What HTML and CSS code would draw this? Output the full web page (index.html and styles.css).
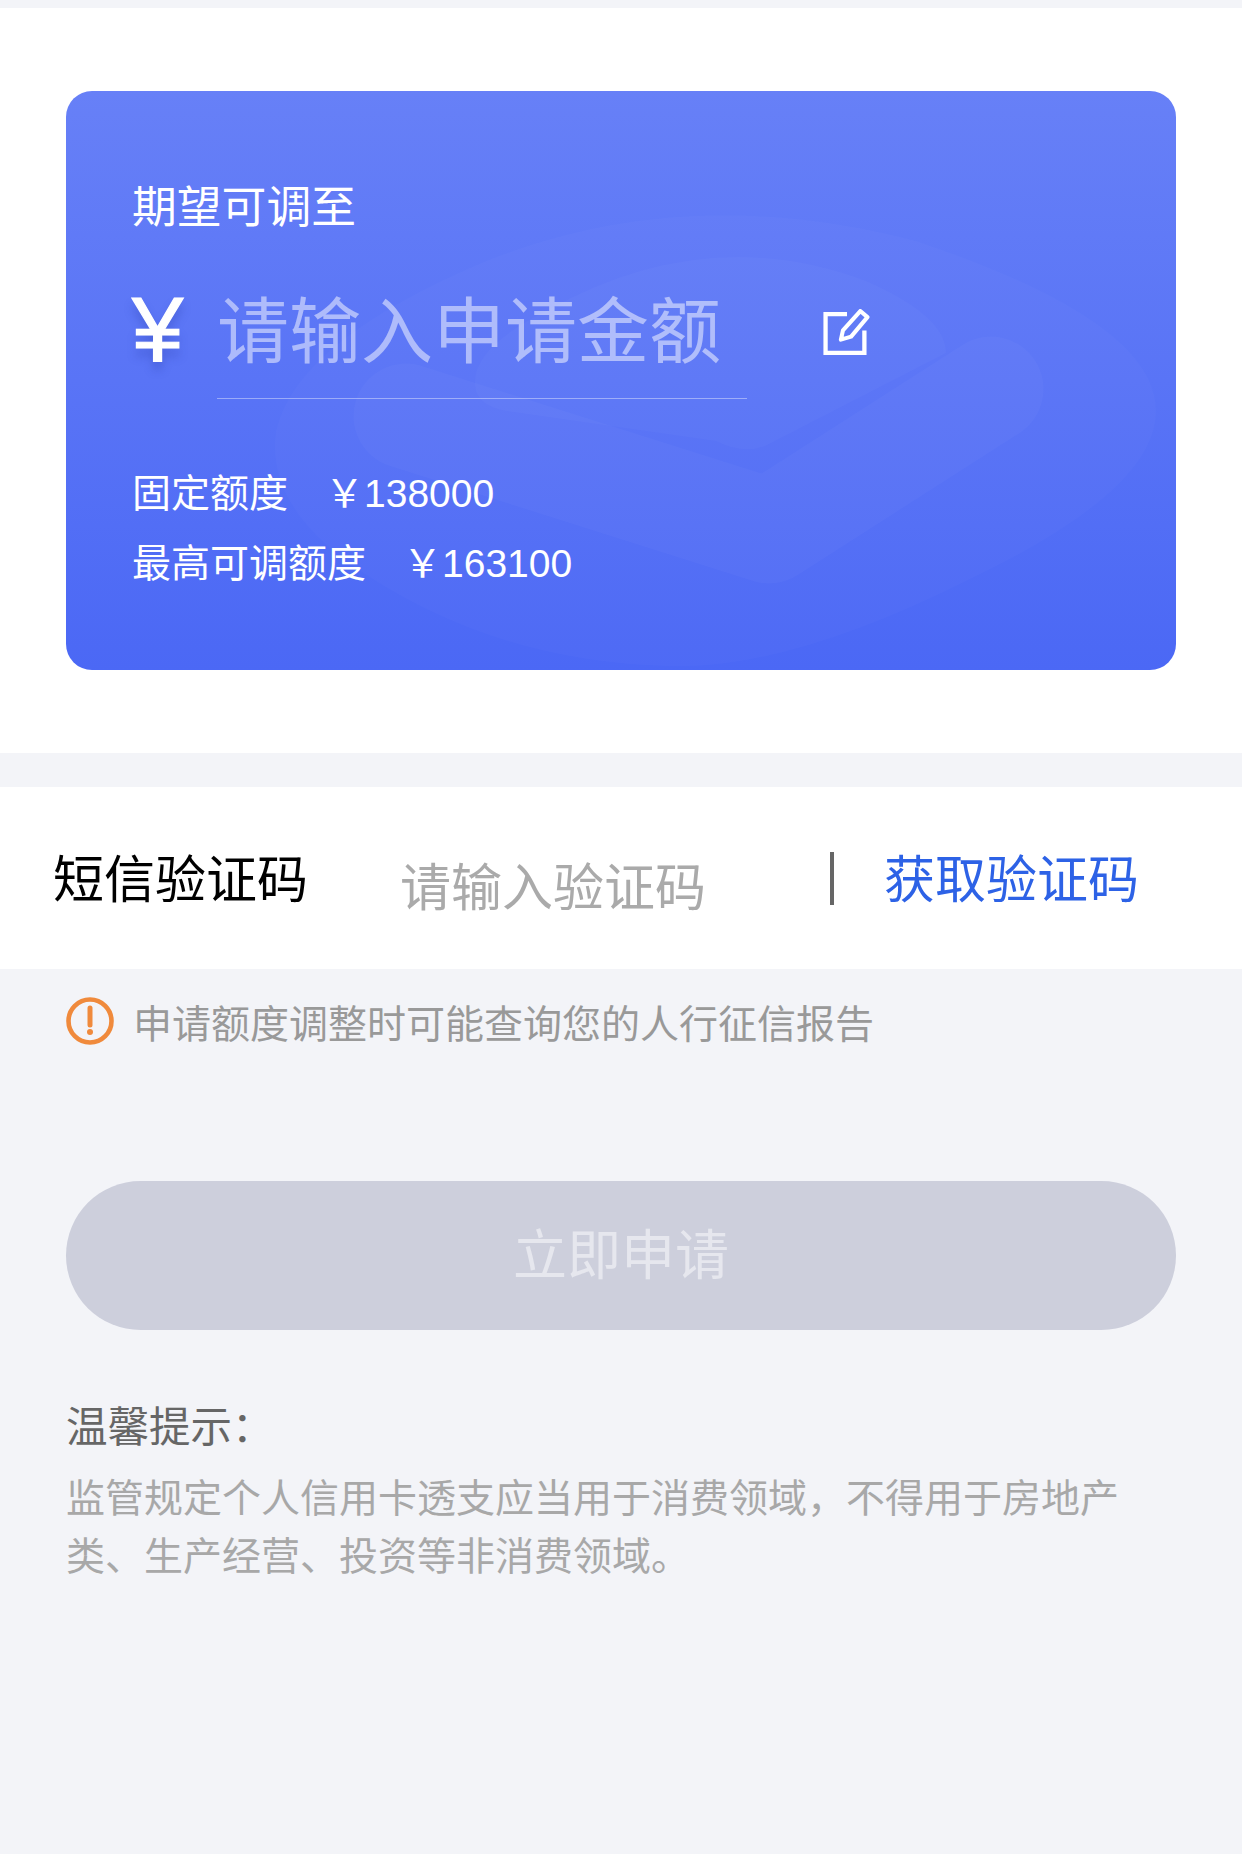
FILE: index.html
```html
<!DOCTYPE html>
<html lang="zh-CN">
<head>
  <meta charset="utf-8">
  <title>额度调整</title>
  <link rel="stylesheet" href="styles.css">
</head>
<body>
  <section class="quota">
    <div class="card">
      <svg class="card-mark" viewBox="0 0 1110 579" aria-hidden="true">
        <path d="M210 340 Q230 250 420 170 Q620 90 850 150 Q1090 230 1090 320 Q1090 400 900 490 Q720 580 600 575 Q420 570 280 470 Q200 410 210 340 Z" fill="#fff" opacity="0.02"/>
        <path d="M410 300 Q400 260 480 220 Q640 130 800 190 Q880 225 880 262 L703 353 Q680 365 650 350 L440 320 Q415 315 410 300 Z" fill="#fff" opacity="0.022"/>
        <path d="M340 325 L703 440 L925 298" fill="none" stroke="#fff" stroke-width="105" stroke-linecap="round" stroke-linejoin="round" opacity="0.028"/>
      </svg>
      <div class="card-title">期望可调至</div>
      <div class="amount-row">
        <span class="yen">¥</span>
        <div class="amount-input">请输入申请金额</div>
        <svg class="edit-icon" viewBox="0 0 46 46" aria-hidden="true">
          <path d="M24 5 H3 V43 H41 V21" fill="none" stroke="#fff" stroke-width="4.2"/>
          <path d="M37 2 L44 8 L28 27 L18 30 L20 21 Z" fill="none" stroke="#fff" stroke-width="4" stroke-linejoin="round"/>
        </svg>
      </div>
      <div class="limit-row">固定额度<span class="limit-value">￥138000</span></div>
      <div class="limit-row">最高可调额度<span class="limit-value">￥163100</span></div>
    </div>
  </section>

  <section class="sms-row">
    <span class="sms-label">短信验证码</span>
    <span class="sms-input">请输入验证码</span>
    <span class="sms-divider"></span>
    <a class="sms-link" href="#">获取验证码</a>
  </section>

  <div class="notice">
    <svg class="notice-icon" viewBox="0 0 48 48" aria-hidden="true">
      <circle cx="24" cy="24" r="21.5" fill="none" stroke="#f08a3c" stroke-width="4.6"/>
      <path d="M24 11 V28" stroke="#f08a3c" stroke-width="5" stroke-linecap="round"/>
      <circle cx="24" cy="35" r="3" fill="#f08a3c"/>
    </svg>
    <span>申请额度调整时可能查询您的人行征信报告</span>
  </div>

  <button class="submit-btn" type="button">立即申请</button>

  <div class="tips">
    <div class="tips-title">温馨提示：</div>
    <p class="tips-text">监管规定个人信用卡透支应当用于消费领域，不得用于房地产类、生产经营、投资等非消费领域。</p>
  </div>
</body>
</html>
```

FILE: styles.css
```css
html, body {
  margin: 0;
  padding: 0;
}

body {
  min-height: 1854px;
  padding-top: 8px;
  box-sizing: border-box;
  background-color: #f3f4f8;
  font-family: "Noto Sans CJK SC", "Liberation Sans", sans-serif;
}

.quota {
  background-color: #fff;
  padding: 83px 66px;
  margin-bottom: 34px;
}

.card {
  position: relative;
  overflow: hidden;
  box-sizing: border-box;
  height: 579px;
  padding: 81px 66px 0;
  border-radius: 26px;
  background: linear-gradient(to bottom, #6780f7, #4b68f5);
  color: #fff;
}

.card-mark {
  position: absolute;
  left: 0;
  top: 0;
  width: 100%;
  height: 100%;
}

.card-title {
  position: relative;
  font-size: 44.8px;
  line-height: 64px;
}

.amount-row {
  position: relative;
  display: flex;
  align-items: flex-start;
  margin-top: 40px;
}

.yen {
  width: 85px;
  margin-top: 4px;
  font-family: "Liberation Sans", sans-serif;
  font-size: 92px;
  line-height: 100px;
  -webkit-text-stroke: 1.2px #fff;
  text-shadow: 0 8px 10px rgba(40, 60, 170, 0.35);
}

.amount-input {
  box-sizing: border-box;
  width: 530px;
  height: 123px;
  border-bottom: 1px solid rgba(255, 255, 255, 0.4);
  font-size: 72px;
  line-height: 100px;
  color: rgba(255, 255, 255, 0.5);
}

.edit-icon {
  width: 48px;
  height: 47px;
  margin: 33px 0 0 75px;
}

.limit-row {
  position: relative;
  font-size: 39px;
  line-height: 70px;
}

.amount-row + .limit-row {
  margin-top: 56px;
}

.limit-value {
  margin-left: 37px;
  font-family: "Liberation Sans", "Noto Sans CJK SC", sans-serif;
  font-size: 39px;
  line-height: 1;
}

.sms-row {
  display: flex;
  align-items: center;
  height: 182px;
  padding-left: 53px;
  background-color: #fff;
}

.sms-label {
  width: 347px;
  padding-bottom: 4px;
  font-size: 51px;
  color: #000;
}

.sms-input {
  width: 430px;
  padding-top: 12px;
  font-size: 51px;
  color: #aaa;
}

.sms-divider {
  width: 4px;
  height: 53px;
  margin-right: 50px;
  background-color: #666;
}

.sms-link {
  padding-bottom: 4px;
  font-size: 51px;
  color: #2d62e6;
  text-decoration: none;
}

.notice {
  display: flex;
  align-items: center;
  padding: 24px 66px 0;
  font-size: 39px;
  line-height: 56px;
  color: #999;
}

.notice-icon {
  width: 48px;
  height: 48px;
  margin-right: 19px;
}

.submit-btn {
  display: block;
  width: 1110px;
  height: 149px;
  margin: 132px 66px 0;
  padding: 0 0 9px;
  border: 0;
  border-radius: 75px;
  background-color: #cdcfdc;
  color: #e6e7ee;
  font-family: inherit;
  font-size: 54px;
}

.tips {
  padding: 66px 66px 0;
}

.tips-title {
  font-size: 41.5px;
  line-height: 56px;
  color: #666;
}

.tips-text {
  margin: 14px 0 0;
  width: 1060px;
  font-size: 39px;
  line-height: 58px;
  color: #a8a8a8;
}
```
